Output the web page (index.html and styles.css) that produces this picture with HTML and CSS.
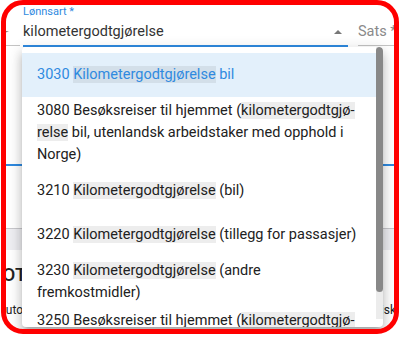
FILE: index.html
```html
<!DOCTYPE html>
<html lang="nb">
<head>
  <meta charset="UTF-8" />
  <meta name="viewport" content="width=device-width, initial-scale=1.0" />
  <title>Lønnsart</title>
  <link rel="stylesheet" href="styles.css">
</head>
<body>

  <div class="frame">
    <!-- skjemaet bak nedtrekkslista -->
    <div class="page">
      <div class="form-row">
        <div class="field field-stub">
          <div class="field-input"><span class="caret-down"></span></div>
        </div>
        <div class="field field-main">
          <label class="field-label">Lønnsart *</label>
          <div class="field-input">
            <span class="field-value">kilometergodtgjørelse</span>
            <span class="caret-up"></span>
          </div>
        </div>
        <div class="field field-sats">
          <div class="field-input"><span class="placeholder">Sats *</span></div>
        </div>
      </div>

      <div class="tab-line"></div>
      <div class="table-head"></div>

      <h2 class="section-title">TOTAL</h2>
      <div class="footer-row">
        <span>Autorisert</span>
        <span>Risk</span>
      </div>
    </div>

    <!-- nedtrekksliste -->
    <div class="dropdown">
      <ul class="options">
        <li class="option active"><span>3030 <mark>Kilometergodtgjørelse</mark> bil</span></li>
        <li class="option"><span>3080 Besøksreiser til hjemmet (<mark>kilometergodtgjø&shy;relse</mark> bil, utenlandsk arbeidstaker med opphold i Norge)</span></li>
        <li class="option"><span>3210 <mark>Kilometergodtgjørelse</mark> (bil)</span></li>
        <li class="option"><span>3220 <mark>Kilometergodtgjørelse</mark> (tillegg for passasjer)</span></li>
        <li class="option"><span>3230 <mark>Kilometergodtgjørelse</mark> (andre fremkostmidler)</span></li>
        <li class="option"><span>3250 Besøksreiser til hjemmet (<mark>kilometergodtgjø&shy;relse</mark> bil)</span></li>
      </ul>
      <div class="scrollbar"><div class="scrollbar-thumb"></div></div>
    </div>
  </div>

</body>
</html>
```

FILE: styles.css
```css
body {
  margin: 0;
  padding: 0;
  background-color: #fff;
  font-family: 'Roboto', 'Liberation Sans', sans-serif;
  color: #212121;
}

.frame {
  position: relative;
  width: 398px;
  height: 334px;
  margin-left: 1px;
  box-sizing: border-box;
  border: 5px solid #ff0000;
  border-radius: 22px;
  overflow: hidden;
  background-color: #fff;
}

.page {
  width: 420px;
}

/* skjemafelt */
.form-row {
  display: flex;
  gap: 3px;
}

.field-stub {
  width: 14px;
  flex: none;
  padding-top: 13px;
}

.field-main {
  width: 325px;
  flex: none;
  margin-right: 7px;
}

.field-sats {
  width: 80px;
  flex: none;
  padding-top: 13px;
}

.field-label {
  display: block;
  height: 13px;
  font-size: 11px;
  line-height: 13px;
  color: #2f8ae0;
}

.field-input {
  display: flex;
  align-items: center;
  height: 27px;
  border-bottom: 1px solid #c4c4c4;
}

.field-main .field-input {
  border-bottom: 2px solid #2f8ae0;
}

.field-value {
  flex: 1;
  font-size: 14.5px;
  color: #333;
}

.placeholder {
  font-size: 14.5px;
  color: #8a8a8a;
}

.caret-up {
  width: 0;
  height: 0;
  margin-right: 6px;
  border-left: 4px solid transparent;
  border-right: 4px solid transparent;
  border-bottom: 4px solid #777;
}

.caret-down {
  width: 0;
  height: 0;
  margin-left: -5px;
  border-left: 4px solid transparent;
  border-right: 4px solid transparent;
  border-top: 2px solid #888;
}

.tab-line {
  margin-top: 117px;
  height: 2px;
  background-color: #2f8ae0;
}

.table-head {
  margin-top: 62px;
  height: 21px;
  border-top: 1px solid #c8c8cc;
  background-color: #eeeef2;
}

.section-title {
  margin: 13px 0 0 -15px;
  font-size: 19px;
  font-weight: 500;
  line-height: 24px;
  color: #222;
}

.footer-row {
  display: flex;
  justify-content: space-between;
  margin: 15px 0 0 -8px;
  width: 398px;
  font-size: 12px;
  line-height: 16px;
  color: #222;
}

/* nedtrekksliste */
.dropdown {
  position: absolute;
  left: 16px;
  top: 42px;
  width: 361px;
  height: 280px;
  background-color: #fff;
  border-radius: 4px;
  overflow: hidden;
  box-shadow: 0 5px 5px -3px rgba(0, 0, 0, 0.2), 0 8px 10px 1px rgba(0, 0, 0, 0.14), 0 3px 14px 2px rgba(0, 0, 0, 0.12);
}

.options {
  list-style: none;
  margin: 0;
  padding: 6px 0;
  height: 100%;
  box-sizing: border-box;
  overflow: hidden;
}

.scrollbar {
  position: absolute;
  top: 0;
  right: 0;
  bottom: 8px;
  width: 7px;
  background-color: #ececec;
}

.scrollbar-thumb {
  height: 245px;
  background-color: #888;
  border-radius: 4px;
}

.option {
  display: flex;
  align-items: center;
  min-height: 44px;
  box-sizing: border-box;
  padding: 3px 20px 3px 15px;
  font-size: 14.5px;
  line-height: 22px;
  color: #212121;
}

.option.active {
  background-color: #e3f0fb;
  color: #2f8ae0;
}

mark {
  background-color: rgba(0, 0, 0, 0.07);
  color: inherit;
}
```
